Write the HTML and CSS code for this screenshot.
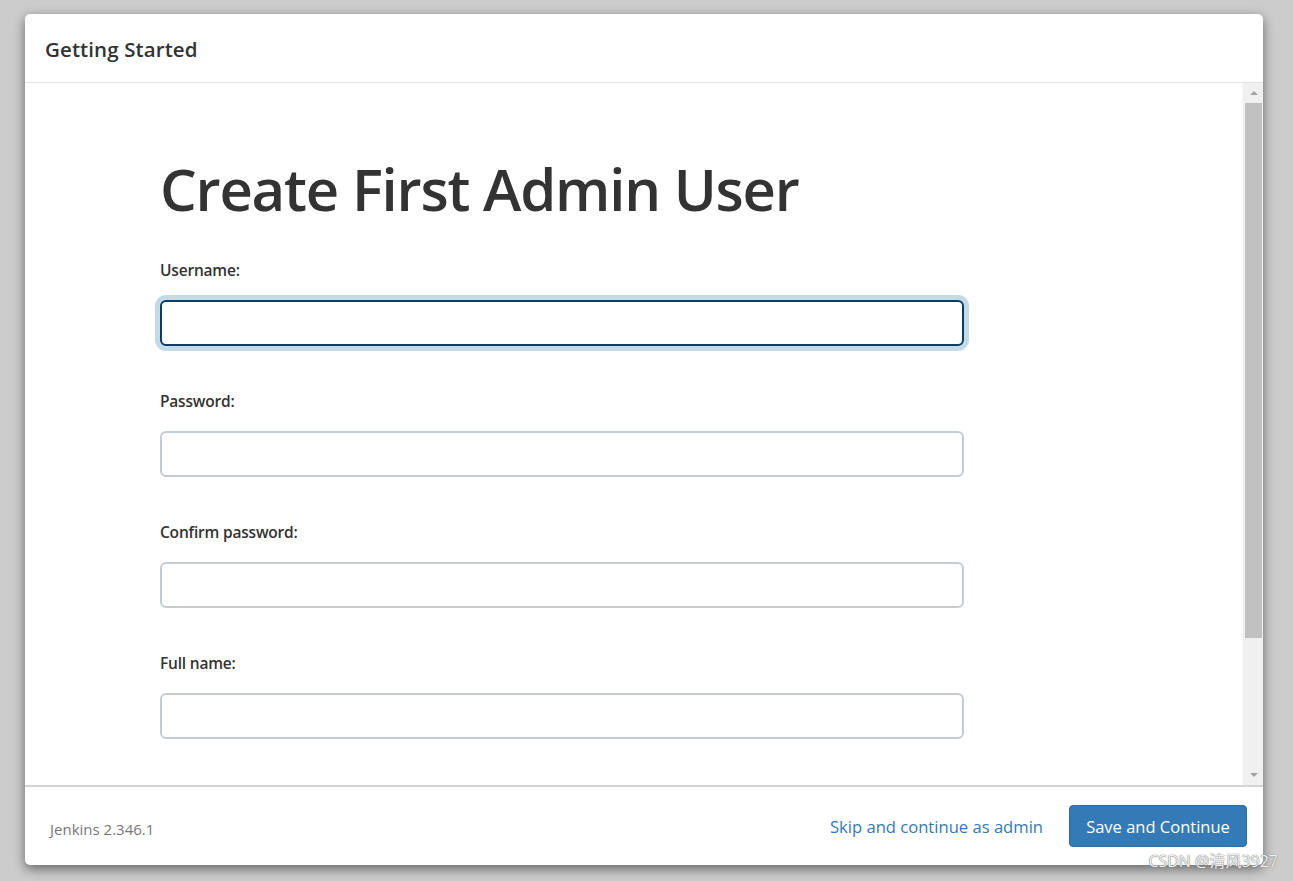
FILE: index.html
```html
<!DOCTYPE html>
<html lang="en">
  <head>
    <meta charset="UTF-8" />
    <meta name="viewport" content="width=device-width, initial-scale=1.0" />
    <link rel="stylesheet" href="styles.css">
    <title>Getting Started</title>
  </head>
  <body>
    <div class="modal">
      <div class="modal-header">
        <h4>Getting Started</h4>
      </div>
      <div class="modal-body">
        <div class="content">
          <h1>Create First Admin User</h1>
          <div class="field">
            <label for="username">Username:</label>
            <input type="text" id="username" class="focused" />
          </div>
          <div class="field">
            <label for="password1">Password:</label>
            <input type="password" id="password1" />
          </div>
          <div class="field">
            <label for="password2">Confirm password:</label>
            <input type="password" id="password2" />
          </div>
          <div class="field">
            <label for="fullname">Full name:</label>
            <input type="text" id="fullname" />
          </div>
        </div>
        <div class="scrollbar">
          <div class="arrow up"></div>
          <div class="track">
            <div class="thumb"></div>
          </div>
          <div class="arrow down"></div>
        </div>
      </div>
      <div class="modal-footer">
        <span class="version">Jenkins 2.346.1</span>
        <div class="actions">
          <a href="#" class="skip">Skip and continue as admin</a>
          <button class="save">Save and Continue</button>
        </div>
      </div>
    </div>
    <div class="watermark">CSDN @清风3927</div>
  </body>
</html>
```

FILE: styles.css
```css
* {
  margin: 0;
  padding: 0;
  box-sizing: border-box;
  font-family: "Open Sans", "Noto Sans", "Noto Sans CJK SC", sans-serif;
}
body {
  height: 100vh;
  background: #cccccc;
  padding: 14px 30px 16px 25px;
  overflow: hidden;
  color: #333;
}
.modal {
  height: 851px;
  display: flex;
  flex-flow: column;
  background: white;
  border-radius: 5px;
  box-shadow: 0 4px 12px rgba(0, 0, 0, 0.5);
  overflow: hidden;
}
.modal-header {
  height: 69px;
  border-bottom: 1px solid #e5e5e5;
  padding: 21px 20px 0;
}
.modal-header h4 {
  font-size: 20.5px;
  font-weight: 600;
  color: #333;
  letter-spacing: 0.1px;
}
.modal-body {
  flex: 1;
  display: flex;
  border-bottom: 2px solid #d4d4d4;
}
.content {
  flex: 1;
  padding: 77px 0 0 135px;
}
h1 {
  font-size: 58px;
  font-weight: 600;
  color: #333;
  line-height: 1;
  letter-spacing: -1.2px;
  margin-bottom: 41px;
}
.field {
  display: flex;
  flex-flow: column;
  margin-bottom: 44px;
}
label {
  font-size: 15.5px;
  font-weight: 600;
  color: #333;
  letter-spacing: -0.2px;
  line-height: 22px;
  margin-bottom: 19px;
}
input {
  width: 804px;
  height: 46px;
  border: 2px solid #c3ccd2;
  border-radius: 6px;
  background: white;
  outline: none;
}
input.focused {
  border-color: #0b3d63;
  box-shadow: 0 0 0 5px #c3dae8;
}
.scrollbar {
  width: 21px;
  display: flex;
  flex-flow: column;
  background: #f0f0f0;
  border-left: 1px solid #f7f7f7;
  padding: 0 1px 0 2px;
}
.arrow {
  height: 20px;
  display: flex;
  justify-content: center;
  align-items: center;
}
.arrow::after {
  content: "";
  border-left: 4px solid transparent;
  border-right: 4px solid transparent;
}
.up::after {
  border-bottom: 4px solid #a3a3a3;
}
.down::after {
  border-top: 4px solid #a3a3a3;
}
.track {
  flex: 1;
}
.thumb {
  height: 535px;
  background: #c1c1c1;
}
.modal-footer {
  height: 78px;
  display: flex;
  justify-content: space-between;
  align-items: center;
  padding: 0 16px 0 25px;
}
.version {
  font-size: 15px;
  color: #777;
  margin-top: 6px;
}
.actions {
  display: flex;
  align-items: center;
  gap: 26px;
}
.skip {
  font-size: 16.6px;
  color: #337ab7;
  text-decoration: none;
}
.save {
  width: 178px;
  height: 42px;
  background: #337ab7;
  color: white;
  border: 1px solid #2e6da4;
  border-radius: 4px;
  font-size: 16.5px;
}
.watermark {
  position: absolute;
  right: 15px;
  bottom: 9px;
  font-size: 16px;
  color: rgba(255, 255, 255, 0.9);
  text-shadow: 0 0 1px #777, 0 0 1px #777;
}
```
